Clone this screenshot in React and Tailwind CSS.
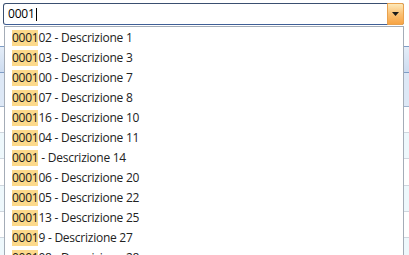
import React from "react"

const items = [
  ["0001", "02 - Descrizione 1"],
  ["0001", "03 - Descrizione 3"],
  ["0001", "00 - Descrizione 7"],
  ["0001", "07 - Descrizione 8"],
  ["0001", "16 - Descrizione 10"],
  ["0001", "04 - Descrizione 11"],
  ["0001", " - Descrizione 14"],
  ["0001", "06 - Descrizione 20"],
  ["0001", "05 - Descrizione 22"],
  ["0001", "13 - Descrizione 25"],
  ["0001", "9 - Descrizione 27"],
  ["0001", "08 - Descrizione 28"],
]

export default function App() {
  const font = { fontFamily: '"Open Sans", "Noto Sans", sans-serif' }

  return (
    <div className="relative w-[409px] h-[255px] overflow-hidden bg-white text-[12px] text-black" style={font}>

      {/* combo */}
      <div className="pt-[3px] pl-[3px]">
        <div className="flex h-[22px] w-[401px] rounded-[3px] border border-[#3a4f70] border-b-[#3f5f96] bg-white">
          <div className="flex flex-1 items-center pl-[4px] leading-none tracking-[-0.2px]">
            0001<span className="ml-[1px] h-[13px] w-px bg-black" />
          </div>
          <div className="flex w-[17px] items-center justify-center rounded-r-[2px] border border-[#e9a24e] bg-gradient-to-b from-[#fde9b8] via-[#fbc072] to-[#f7a444] -my-px -mr-px">
            <svg width="7" height="4" viewBox="0 0 7 4">
              <path d="M0 0h7L3.5 4z" fill="#1a1a1a" />
            </svg>
          </div>
        </div>
      </div>

      {/* grid behind */}
      <div className="mt-[21px]">
        <div className="h-[27px] border-y border-[#7f9dc6] bg-gradient-to-b from-[#e4edf8] to-[#cddcf0]" />
        <div className="h-[34px] border-b border-[#9fb3cc] bg-[#dde8f6]" />
        <div className="h-[26px] border-b border-[#cfd6de] bg-white" />
        <div className="h-[26px] border-b border-[#cfd6de] bg-[#eef8fc]" />
        <div className="h-[27px] border-b border-[#cfd6de] bg-white" />
        <div className="h-[26px] border-b border-[#cfd6de] bg-[#eef8fc]" />
        <div className="h-[26px] border-b border-[#cfd6de] bg-white" />
        <div className="h-[26px] bg-[#eef8fc]" />
      </div>

      {/* dropdown list */}
      <div className="absolute left-[4px] top-[26px] w-[400px] h-[240px] border border-[#a4acb7] bg-white pt-[1px]">
        {items.map(([hit, rest], i) => (
          <div key={i} className="flex h-[20px] items-center pl-[7px] whitespace-pre tracking-[-0.25px]">
            <span className="bg-[#fcd98b] leading-[16px] font-medium text-[#1a1a1a]">{hit}</span>
            <span className="leading-[16px] text-[#222]">{rest}</span>
          </div>
        ))}
      </div>

    </div>
  )
}
